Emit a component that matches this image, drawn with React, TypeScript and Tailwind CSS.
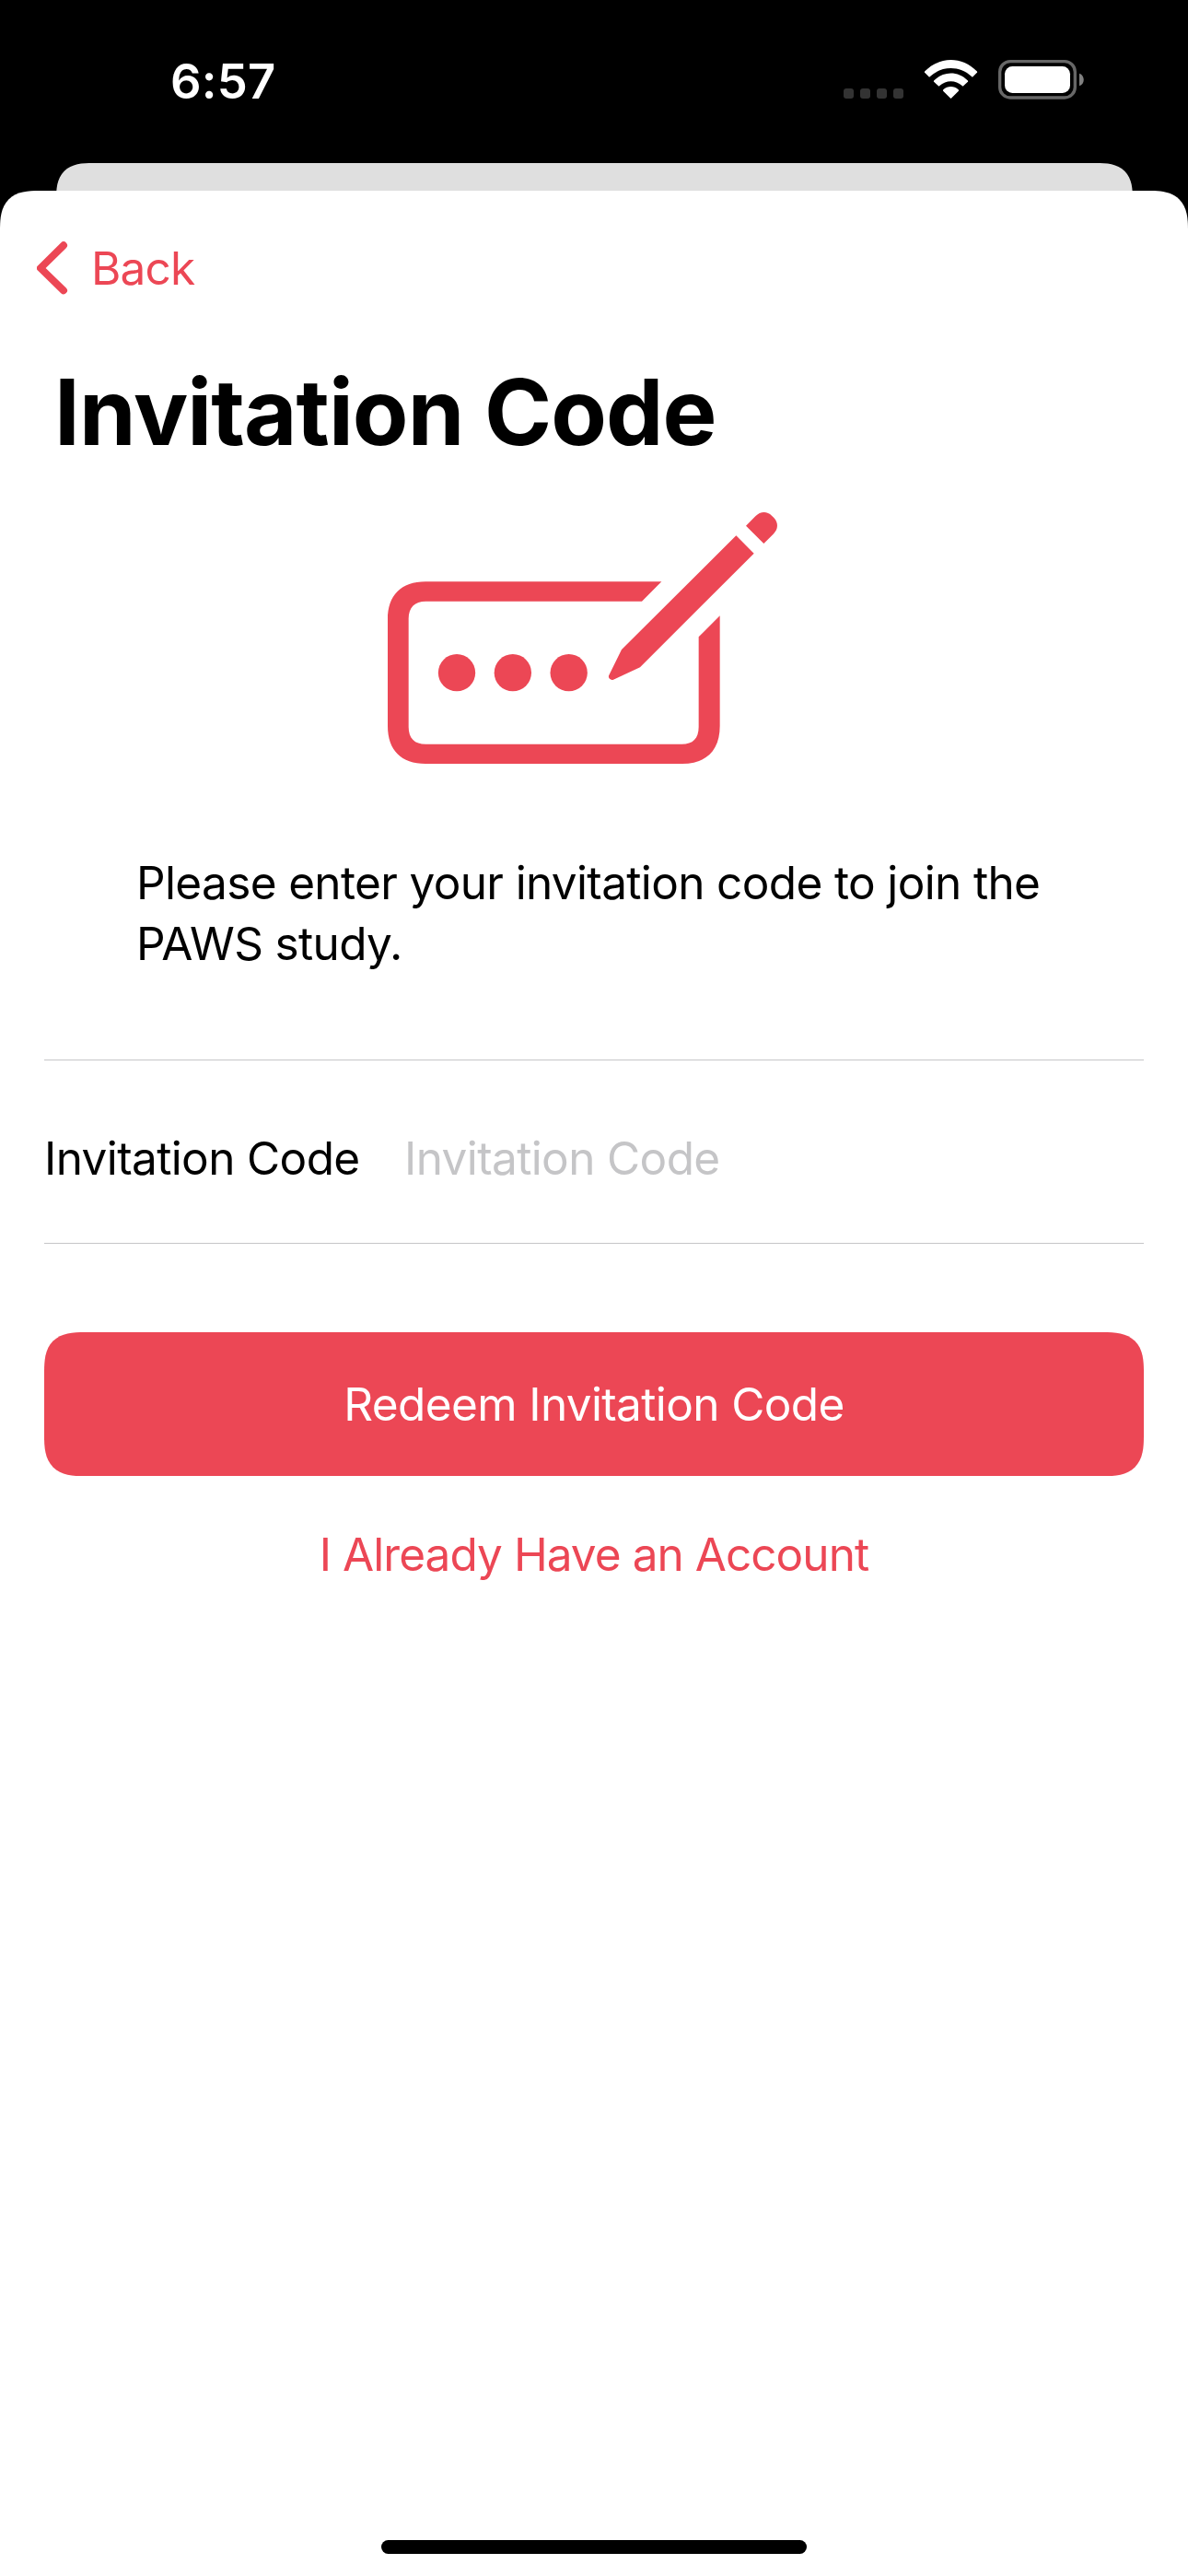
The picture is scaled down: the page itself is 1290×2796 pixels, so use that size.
import React from 'react';

function StatusIcons() {
  return (
    <svg className="mt-[62px] ml-[616px] h-[48px] w-[266px]" viewBox="0 0 798 144">
      {/* origin is (913, 62) on the screen, three units per pixel */}
      <g fill="#333333">
        <rect x="9" y="102" width="33" height="33" rx="9" />
        <rect x="63" y="102" width="33" height="33" rx="9" />
        <rect x="117" y="102" width="33" height="33" rx="9" />
        <rect x="171" y="102" width="33" height="33" rx="9" />
      </g>
      <g fill="#ffffff">
        <path d="M274 46 Q271 48.500 274 51 L286 63 Q288.500 66 291 63 C329 27 388 27 426 63 Q428.500 66 431 63 L443 51 Q446 48.500 443 46 C395 -3 322 -3 274 46 Z" />
        <path d="M304 76 Q301 78.500 304 81 L317 93 Q319.500 96 322 93 C343 74 374 74 395 93 Q397.500 96 400 93 L413 81 Q416 78.500 413 76 C382 45 335 45 304 76 Z" />
        <path d="M334 106 Q331 108.500 334 111 L356 133 Q358.500 136 361 133 L383 111 Q386 108.500 383 106 C369 93 348 93 334 106 Z" />
      </g>
      <rect x="518" y="14" width="245" height="118" rx="34" fill="none" stroke="#676767" strokeWidth="10" />
      <rect x="534" y="30" width="213" height="87" rx="25" fill="#ffffff" />
      <path d="M777 53 C796 59 796 88 777 94 Z" fill="#808080" />
    </svg>
  );
}

function CodeEntryIcon() {
  return (
    <svg className="mt-[23px] ml-[400px] h-[320px] w-[460px]" viewBox="0 0 1380 960" fill="#ec4755">
      <path d="M955 304 H186 C107 304 63 348 63 427 V774 C63 853 107 897 186 897 H1022 C1101 897 1145 853 1145 774 V415 L1076 484 V777 C1076 814 1057 833.500 1021 833.500 H187 C151 833.500 131 814 131 777 V424 C131 388 151 368 187 368 H891 Z" />
      <circle cx="288" cy="600.500" r="60.500" />
      <circle cx="470.500" cy="600.500" r="60.500" />
      <circle cx="653" cy="600.500" r="60.500" />
      <path d="M1198 154 L1256 212 L885 583 L798 623 C789 627 779 617 784 608 L825 525 Z" />
      <path d="M1230 122 L1261 91 C1277 74 1299 74 1314 89 L1321 96 C1336 112 1336 133 1319 149 L1288 180 Z" />
    </svg>
  );
}

export default function App() {
  return (
    <div className="flex h-[2796px] w-[1290px] flex-col overflow-hidden bg-black font-['Inter',sans-serif] text-[49.5px] leading-[60px] text-black">
      <header className="flex h-[177px] shrink-0">
        <time className="mt-[57px] ml-[185px] w-[112px] text-[52.5px] leading-[63px] font-semibold tracking-[0.2px] whitespace-nowrap text-white">
          6:57
        </time>
        <StatusIcons />
      </header>
      <div className="mx-[60.5px] -mb-[20px] h-[50px] shrink-0 rounded-t-[40px] bg-[#dfdfdf] [corner-shape:superellipse(1.49)]" />
      <main className="relative flex min-h-0 flex-1 flex-col rounded-t-[43px] bg-white px-12 [corner-shape:superellipse(1.49)]">
        <button className="mt-[54px] flex h-[60px] items-start self-start text-[#ec4755]">
          <svg className="-ml-2 h-[60px] w-[34px]" viewBox="0 0 102 180" fill="none" stroke="currentColor" strokeWidth="24" strokeLinecap="round" strokeLinejoin="round">
            <path d="M87 16 L12 90 L87 163" />
          </svg>
          <span className="ml-[25px] tracking-[-0.85px] whitespace-nowrap">Back</span>
        </button>
        <h1 className="mt-[66px] ml-[11px] text-[99px] leading-[120px] font-bold tracking-[-0.92px] whitespace-nowrap">
          Invitation Code
        </h1>
        <div className="-mx-12 flex">
          <CodeEntryIcon />
        </div>
        <p className="mt-[75px] ml-[100px] w-[1000px] leading-[66px] tracking-[-0.645px]">
          Please enter your invitation code to join the
          <br />
          PAWS study.
        </p>
        <div className="mt-[93px] flex h-[200px] items-start border-y border-[#c6c6c8] pt-[76px]">
          <label htmlFor="code" className="w-[391px] tracking-[-0.62px] whitespace-nowrap">
            Invitation Code
          </label>
          <input
            id="code"
            placeholder="Invitation Code"
            className="h-[60px] min-w-0 flex-1 bg-transparent p-0 tracking-[-0.62px] outline-none placeholder:text-[#c5c5c7] placeholder:opacity-100"
          />
        </div>
        <button className="mt-[96px] h-[156px] w-full rounded-[44px] bg-[#ec4755] tracking-[-0.63px] text-white [corner-shape:superellipse(1.49)]">
          Redeem Invitation Code
        </button>
        <button className="mt-[55px] self-center tracking-[-0.95px] whitespace-nowrap text-[#ec4755]">
          I Already Have an Account
        </button>
        <div className="mt-auto mb-6 h-[15px] w-[462px] self-center rounded-full bg-black" />
      </main>
    </div>
  );
}
